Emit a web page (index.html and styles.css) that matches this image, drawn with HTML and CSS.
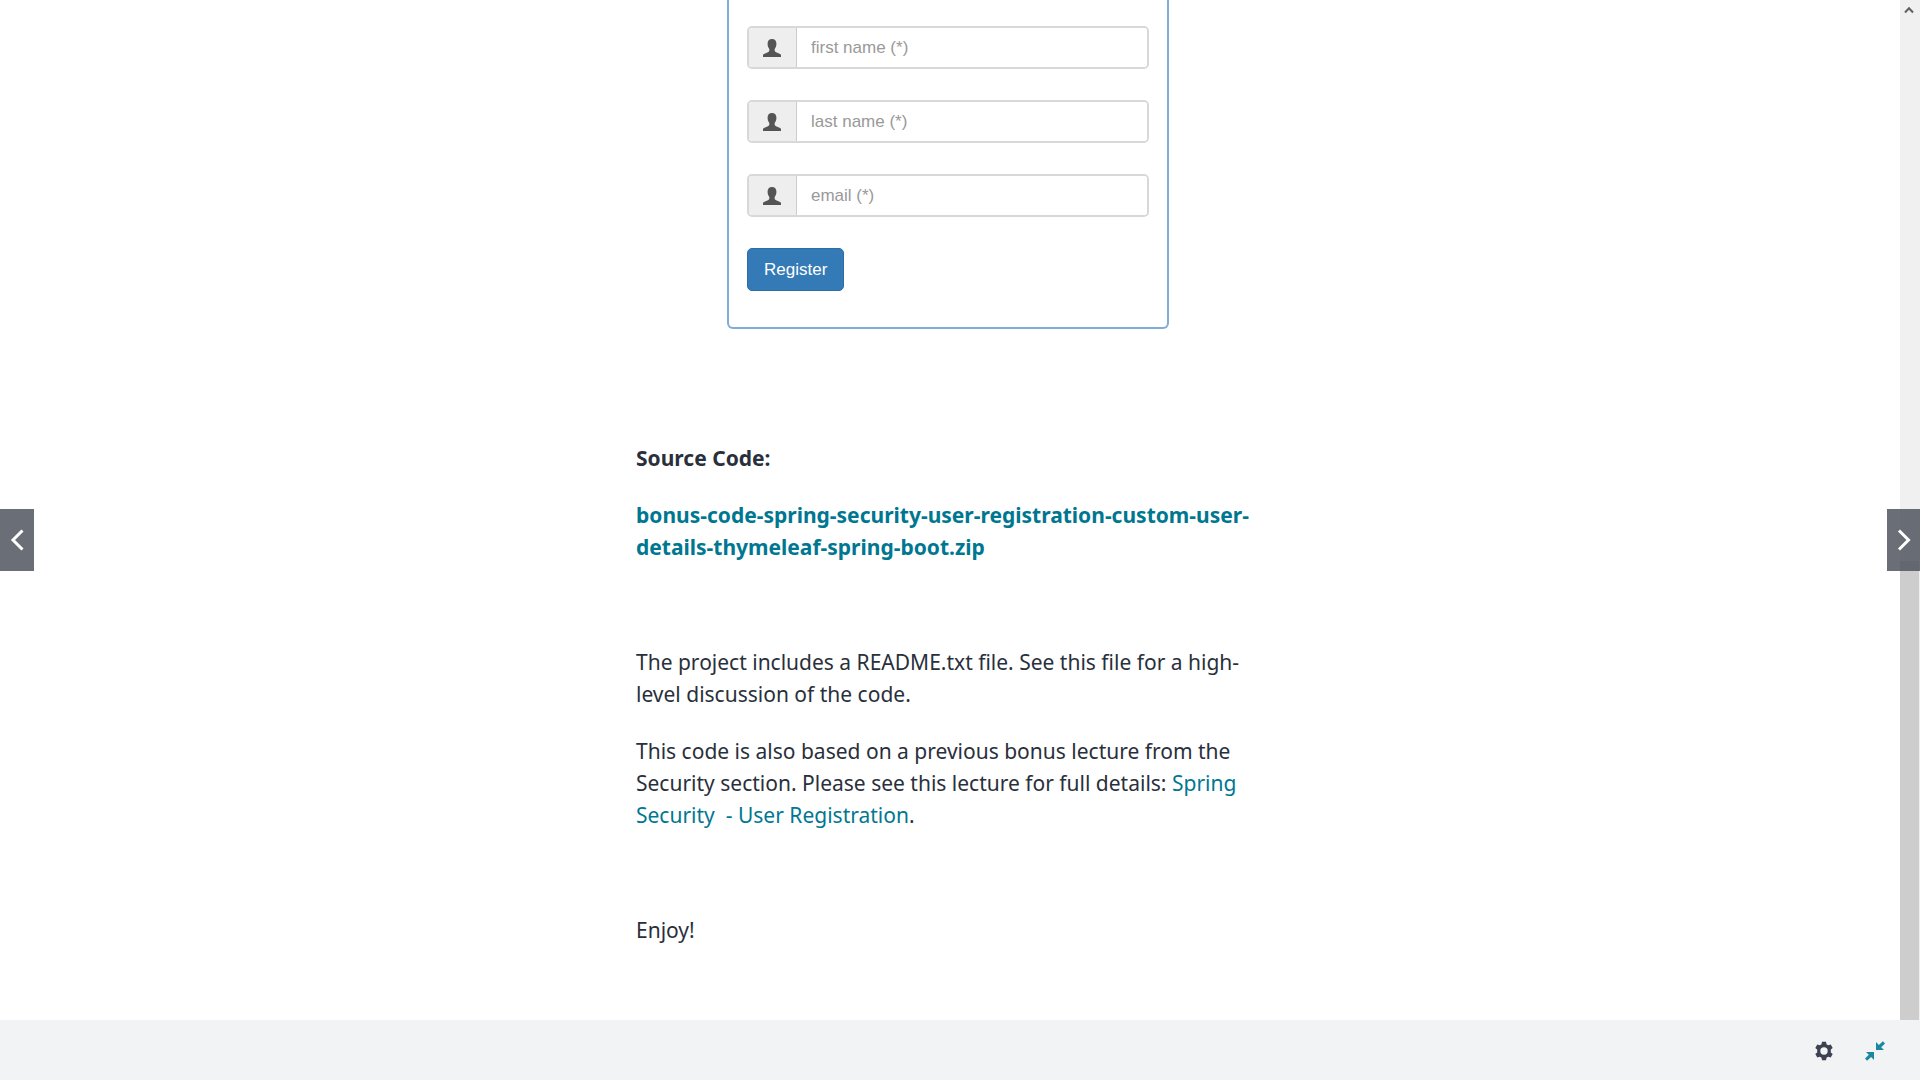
FILE: index.html
```html
<!DOCTYPE html>
<html lang="en">
<head>
<meta charset="utf-8">
<meta name="viewport" content="width=device-width, initial-scale=1">
<title>Spring Security - User Registration</title>
<link rel="stylesheet" href="styles.css">
</head>
<body>
<svg class="defs" aria-hidden="true">
  <symbol id="person" viewBox="0 0 18 18">
    <path d="M9 0C6 0 4.600 1.900 4.600 4.600c0 2.300.5 4.100 1.700 5.400.3 1.600-.1 2.600-1.400 3.200L1.500 14.800C.4 15.300 0 15.700 0 16.600V18h18v-1.400c0-.9-.4-1.300-1.500-1.800l-3.400-1.600c-1.300-.6-1.700-1.600-1.400-3.200 1.200-1.300 1.700-3.100 1.700-5.400C13.400 1.900 12 0 9 0z"/>
  </symbol>
</svg>
<div class="player">
  <div class="viewer">
    <main class="lecture">
      <form class="register">
        <div class="field">
          <label class="addon" for="first" aria-label="First name"><svg class="person"><use href="#person"/></svg></label>
          <input class="text-box" id="first" type="text" placeholder="first name (*)">
        </div>
        <div class="field">
          <label class="addon" for="last" aria-label="Last name"><svg class="person"><use href="#person"/></svg></label>
          <input class="text-box" id="last" type="text" placeholder="last name (*)">
        </div>
        <div class="field">
          <label class="addon" for="email" aria-label="Email"><svg class="person"><use href="#person"/></svg></label>
          <input class="text-box" id="email" type="text" placeholder="email (*)">
        </div>
        <button class="submit" type="button">Register</button>
      </form>
      <article class="article">
        <section class="block">
          <p><strong>Source Code:</strong></p>
          <p><a class="link download" href="#zip">bonus-code-spring-security-user-registration-custom-user-<wbr>details-thymeleaf-spring-boot.zip</a></p>
        </section>
        <section class="block">
          <p>The project includes a README.txt file. See this file for a high-level discussion of the code.</p>
          <p>This code is also based on a previous bonus lecture from the Security section. Please see this lecture for full details: <a class="link" href="#lecture">Spring Security &nbsp;- User Registration</a>.</p>
        </section>
        <section class="block">
          <p>Enjoy!</p>
        </section>
      </article>
    </main>
    <div class="scrollbar" aria-hidden="true">
      <svg class="scroll-up" viewBox="0 0 10 8"><path d="M1 6.500 5 2.200l4 4.300" fill="none" stroke="#606060" stroke-width="2"/></svg>
      <div class="thumb"></div>
    </div>
    <button class="nav prev" type="button" aria-label="Previous lecture"><svg class="chevron" viewBox="0 0 14 22"><path d="M12.500 1.500 3 11l9.500 9.500"/></svg></button>
    <button class="nav next" type="button" aria-label="Next lecture"><svg class="chevron" viewBox="0 0 14 22"><path d="M2 1.500 11.500 11 2 20.500"/></svg></button>
  </div>
  <footer class="controls">
    <button class="control" type="button" aria-label="Settings">
      <svg class="icon gear" viewBox="0 0 20 20"><path fill-rule="evenodd" d="M8 .8h4l.5 2.500 1.700 1 2.500-.9 2 3.500-1.900 1.700v2.800l1.900 1.700-2 3.500-2.500-.9-1.700 1-.5 2.500H8l-.5-2.500-1.700-1-2.500.9-2-3.500 1.900-1.700V8.600L1.300 6.900l2-3.500 2.500.9 1.700-1zM10 6.300a3.700 3.700 0 1 0 0 7.400 3.700 3.700 0 0 0 0-7.400z"/></svg>
    </button>
    <button class="control" type="button" aria-label="Exit full screen">
      <svg class="icon collapse" viewBox="0 0 20 20"><path d="M11 1v8h8l-2.800-2.800L20 2.400 17.900.2l-4 3.800zM9 19v-8H1l2.800 2.800L0 17.600l2.100 2.200 4-3.800z"/></svg>
    </button>
  </footer>
</div>
</body>
</html>
```
FILE: styles.css
```css
* {
  box-sizing: border-box;
}

body {
  margin: 0;
  background: #fff;
  color: #29303b;
  font-family: "Noto Sans", "Open Sans", sans-serif;
  font-size: 21px;
  line-height: 32px;
}

button {
  border: 0;
  padding: 0;
  cursor: pointer;
}

.defs {
  display: none;
}

.player {
  display: flex;
  flex-direction: column;
  height: 100vh;
}

.viewer {
  position: relative;
  display: flex;
  flex: 1;
  min-height: 0;
}

.lecture {
  flex: 1;
  display: flex;
  flex-direction: column;
  align-items: center;
  overflow: hidden;
}

.register {
  display: flex;
  flex-direction: column;
  align-items: flex-start;
  gap: 31px;
  width: 100%;
  max-width: 442px;
  margin-right: 4px;
  padding: 26px 18px 36px;
  border: 2px solid #7fadd6;
  border-top: 0;
  border-radius: 0 0 6px 6px;
  font-family: "Liberation Sans", Arial, sans-serif;
  font-size: 17px;
}

.field {
  display: flex;
  width: 100%;
  height: 43px;
  border: 2px solid #d8d8d8;
  border-radius: 5px;
  overflow: hidden;
}

.addon {
  display: grid;
  place-items: center;
  width: 48px;
  padding-right: 1px;
  background: #eee;
  border-right: 1px solid #ccc;
}

.person {
  width: 18px;
  height: 18px;
  fill: #555;
}

.text-box {
  flex: 1;
  min-width: 0;
  border: 0;
  padding: 0 14px;
  font: inherit;
  background: #fff;
}

.text-box::placeholder {
  color: #999;
}

.submit {
  height: 43px;
  padding: 0 16px;
  border: 1px solid #2e6da4;
  border-radius: 5px;
  background: #337ab7;
  color: #fff;
  font: inherit;
}

.article {
  width: 100%;
  max-width: 628px;
  padding-top: 113px;
}

.block {
  margin-bottom: 83px;
}

.block p {
  margin: 0 0 25px;
}

.link {
  color: #007791;
  text-decoration: none;
}

.download {
  font-weight: 700;
}

.scrollbar {
  display: flex;
  flex-direction: column;
  justify-content: space-between;
  width: 20px;
  background: #f0f0f0;
}

.scroll-up {
  width: 10px;
  height: 8px;
  margin: 6px 4px;
}

.thumb {
  height: 45%;
  margin-right: 1px;
  background: #cdcdcd;
}

.nav {
  position: absolute;
  top: 509px;
  display: grid;
  place-items: center;
  width: 34px;
  height: 62px;
  background: rgba(80, 86, 95, 0.85);
}

.prev {
  left: 0;
}

.next {
  right: 0;
  width: 33px;
}

.chevron {
  width: 14px;
  height: 22px;
  fill: none;
  stroke: #fff;
  stroke-width: 3;
}

.controls {
  display: flex;
  justify-content: flex-end;
  align-items: center;
  gap: 20px;
  height: 60px;
  padding: 1px 30px 0 0;
  background: #f2f3f5;
}

.control {
  display: grid;
  place-items: center;
  width: 31px;
  height: 41px;
  background: none;
}

.icon {
  width: 20px;
  height: 20px;
}

.gear {
  fill: #3c4251;
}

.collapse {
  fill: #1c87a0;
}
```
